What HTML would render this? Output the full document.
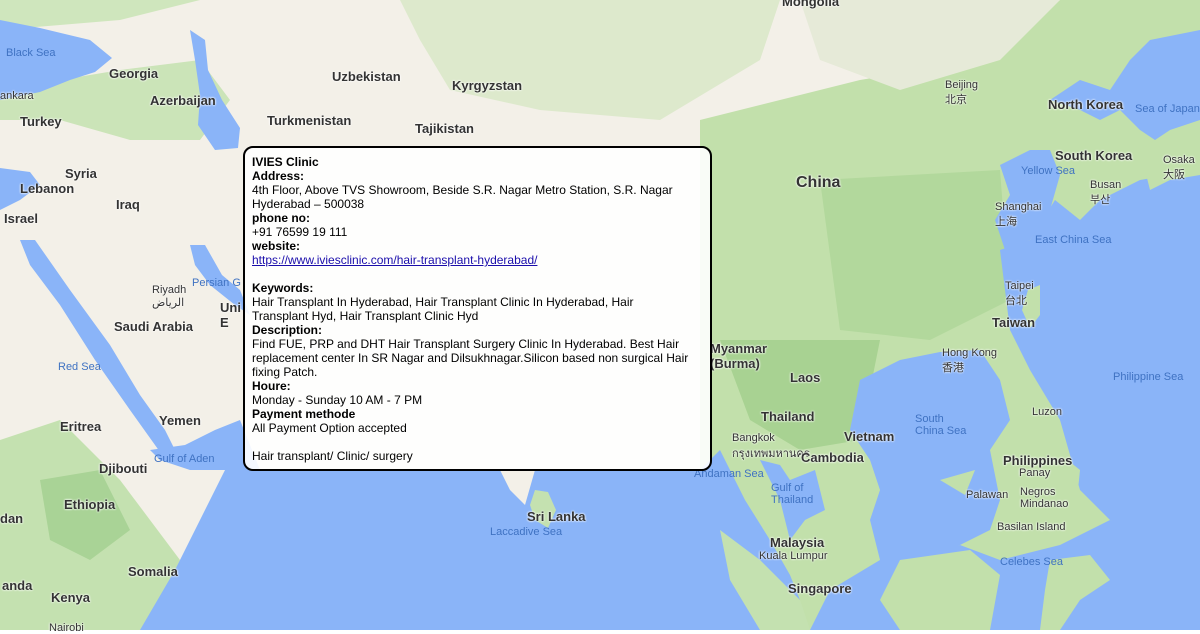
<!DOCTYPE html>
<html><head><meta charset="utf-8"><style>
html,body{margin:0;padding:0;width:1200px;height:630px;overflow:hidden;font-family:"Liberation Sans",Arial,sans-serif}
#map{position:absolute;left:0;top:0}
.l{position:absolute;font-size:13px;color:#333;font-weight:bold;text-shadow:0 0 2px #fff,0 0 2px #fff;white-space:nowrap}
.s{font-size:11px;font-weight:normal}
.w{color:#3f72c2;font-weight:normal;font-size:11px;text-shadow:none}
.c{font-size:16px}
#box{position:absolute;left:243px;top:146px;width:458px;height:314px;border:2px solid #000;border-radius:10px;background:rgba(255,255,255,0.9);padding:7px 0 0 7px;font-size:12px;line-height:14px;color:#000;box-sizing:content-box}
#box a{color:#1a0dab;text-decoration:underline}
</style></head><body>
<svg id="map" width="1200" height="630" viewBox="0 0 1200 630">
<rect width="1200" height="630" fill="#f3f0e8"/>
<!-- green areas -->
<path d="M0 30 L120 20 L200 0 L0 0Z" fill="#cfe6bd"/>
<path d="M0 95 L60 80 L120 70 L200 60 L230 100 L200 140 L130 140 L60 120 L0 120Z" fill="#cbe4b8"/>
<path d="M400 0 L780 0 L760 60 L660 120 L540 110 L450 90 L420 40Z" fill="#dde9cc"/>
<path d="M700 120 L860 80 L980 60 L1060 0 L1200 0 L1200 630 L700 630Z" fill="#c2e0ab"/>
<path d="M800 0 L1060 0 L1000 60 L900 90 L820 60Z" fill="#e6ead8"/>
<path d="M0 440 L60 420 L120 480 L150 520 L180 560 L150 630 L0 630Z" fill="#c4e1b0"/>
<path d="M40 480 L100 470 L130 530 L90 560 L50 540Z" fill="#a9d396"/>
<path d="M820 180 L1000 170 L1010 300 L930 340 L840 330Z" fill="#b2d89c"/>
<path d="M720 340 L880 340 L860 440 L800 450 L750 420Z" fill="#a8d292"/>
<!-- water -->
<path d="M0 20 L40 28 L90 40 L112 58 L95 72 L70 80 L40 92 L0 100Z" fill="#8ab4f8"/>
<path d="M190 30 L205 40 L208 70 L222 100 L240 128 L238 148 L215 150 L198 125 L200 95 L195 60Z" fill="#8ab4f8"/>
<path d="M0 168 L30 172 L40 185 L20 200 L0 210Z" fill="#8ab4f8"/>
<path d="M20 240 L35 240 L70 290 L110 345 L140 395 L165 430 L175 450 L160 452 L130 410 L95 360 L60 305 L30 265Z" fill="#8ab4f8"/>
<path d="M190 245 L205 245 L222 275 L240 290 L250 315 L235 305 L210 285 L195 265Z" fill="#8ab4f8"/>
<!-- Arabian sea & Indian ocean -->
<path d="M150 450 L185 445 L215 430 L240 420 L260 470 L500 470 L510 490 L525 505 L535 470 L600 470 L650 470 L700 470 L720 450 L730 470 L745 500 L770 540 L790 575 L800 600 L790 630 L140 630 L175 570 L205 510 L225 470 L190 470 L160 460Z" fill="#8ab4f8"/>
<path d="M535 490 L548 492 L556 510 L548 528 L535 520 L530 505Z" fill="#c4e1b0"/>
<path d="M720 530 L760 560 L800 600 L810 630 L760 630 L730 580Z" fill="#c4e1b0"/>
<!-- SE asia seas -->
<path d="M760 460 L780 465 L790 480 L815 470 L825 510 L805 520 L790 540 L780 500Z" fill="#8ab4f8"/>
<path d="M860 380 L900 360 L940 352 L980 350 L1000 380 L1010 420 L990 450 L1000 500 L990 530 L960 545 L910 560 L880 560 L870 520 L880 490 L870 460 L850 430 Z" fill="#8ab4f8"/>
<path d="M880 560 L960 545 L1000 560 L1060 545 L1110 520 L1200 530 L1200 630 L810 630 L830 590Z" fill="#8ab4f8"/>
<path d="M900 560 L970 550 L1000 575 L990 630 L900 630 L880 600Z" fill="#c2e0ab"/>
<path d="M1050 560 L1090 555 L1110 580 L1080 600 L1060 630 L1040 630 L1045 590Z" fill="#c2e0ab"/>
<path d="M1000 250 L1030 240 L1055 200 L1080 220 L1100 200 L1140 180 L1200 170 L1200 540 L1110 520 L1080 490 L1060 420 L1030 370 L1010 330Z" fill="#8ab4f8"/>
<path d="M1000 165 L1030 150 L1050 150 L1060 175 L1050 210 L1030 240 L1005 250 L995 220 L1010 195Z" fill="#8ab4f8"/>
<path d="M1050 100 L1080 80 L1110 90 L1130 60 L1150 40 L1200 30 L1200 130 L1170 150 L1140 130 L1120 110 L1100 120 L1080 110Z" fill="#8ab4f8"/>
<path d="M1060 130 L1085 115 L1105 130 L1115 160 L1105 190 L1085 195 L1070 170Z" fill="#c2e0ab"/>
<path d="M1140 150 L1170 130 L1200 120 L1200 175 L1170 180 L1150 190Z" fill="#c2e0ab"/>
<path d="M1028 290 L1040 285 L1040 315 L1030 328 L1022 310Z" fill="#c2e0ab"/>
<path d="M1020 390 L1040 395 L1040 430 L1055 450 L1080 470 L1075 520 L1050 515 L1020 490 L1010 460 L1025 430Z" fill="#c2e0ab"/>
<path d="M940 480 L975 470 L965 495Z" fill="#c2e0ab"/>
</svg>
<div class="l w" style="left:6px;top:47px">Black Sea</div>
<div class="l" style="left:109px;top:66px">Georgia</div>
<div class="l" style="left:150px;top:93px">Azerbaijan</div>
<div class="l s" style="left:0;top:90px">ankara</div>
<div class="l" style="left:20px;top:114px">Turkey</div>
<div class="l" style="left:332px;top:69px">Uzbekistan</div>
<div class="l" style="left:452px;top:78px">Kyrgyzstan</div>
<div class="l" style="left:267px;top:113px">Turkmenistan</div>
<div class="l" style="left:415px;top:121px">Tajikistan</div>
<div class="l" style="left:65px;top:166px">Syria</div>
<div class="l" style="left:20px;top:181px">Lebanon</div>
<div class="l" style="left:4px;top:211px">Israel</div>
<div class="l" style="left:116px;top:197px">Iraq</div>
<div class="l s" style="left:152px;top:284px">Riyadh<br>الرياض</div>
<div class="l" style="left:114px;top:319px">Saudi Arabia</div>
<div class="l w" style="left:58px;top:361px">Red Sea</div>
<div class="l w" style="left:192px;top:277px">Persian G</div>
<div class="l" style="left:159px;top:413px">Yemen</div>
<div class="l" style="left:60px;top:419px">Eritrea</div>
<div class="l w" style="left:154px;top:453px">Gulf of Aden</div>
<div class="l" style="left:99px;top:461px">Djibouti</div>
<div class="l" style="left:64px;top:497px">Ethiopia</div>
<div class="l" style="left:0;top:511px">dan</div>
<div class="l" style="left:128px;top:564px">Somalia</div>
<div class="l" style="left:51px;top:590px">Kenya</div>
<div class="l s" style="left:49px;top:622px">Nairobi</div>
<div class="l" style="left:2px;top:578px">anda</div>
<div class="l" style="left:782px;top:-6px">Mongolia</div>
<div class="l s" style="left:945px;top:79px">Beijing<br>北京</div>
<div class="l" style="left:1048px;top:97px">North Korea</div>
<div class="l w" style="left:1135px;top:103px">Sea of Japan</div>
<div class="l" style="left:1055px;top:148px">South Korea</div>
<div class="l s" style="left:1163px;top:154px">Osaka<br>大阪</div>
<div class="l w" style="left:1021px;top:165px">Yellow Sea</div>
<div class="l s" style="left:1090px;top:179px">Busan<br>부산</div>
<div class="l c" style="left:796px;top:174px">China</div>
<div class="l s" style="left:995px;top:201px">Shanghai<br>上海</div>
<div class="l w" style="left:1035px;top:234px">East China Sea</div>
<div class="l s" style="left:1005px;top:280px">Taipei<br>台北</div>
<div class="l" style="left:992px;top:315px">Taiwan</div>
<div class="l s" style="left:942px;top:347px">Hong Kong<br>香港</div>
<div class="l w" style="left:1113px;top:371px">Philippine Sea</div>
<div class="l" style="left:710px;top:341px">Myanmar<br>(Burma)</div>
<div class="l" style="left:790px;top:370px">Laos</div>
<div class="l" style="left:761px;top:409px">Thailand</div>
<div class="l s" style="left:732px;top:432px">Bangkok<br>กรุงเทพมหานคร</div>
<div class="l" style="left:844px;top:429px">Vietnam</div>
<div class="l" style="left:801px;top:450px">Cambodia</div>
<div class="l w" style="left:915px;top:413px">South<br>China Sea</div>
<div class="l w" style="left:694px;top:468px">Andaman Sea</div>
<div class="l w" style="left:771px;top:482px">Gulf of<br>Thailand</div>
<div class="l s" style="left:1032px;top:406px">Luzon</div>
<div class="l" style="left:1003px;top:453px">Philippines</div>
<div class="l s" style="left:1019px;top:467px">Panay</div>
<div class="l s" style="left:966px;top:489px">Palawan</div>
<div class="l s" style="left:1020px;top:486px">Negros<br>Mindanao</div>
<div class="l s" style="left:997px;top:521px">Basilan Island</div>
<div class="l w" style="left:1000px;top:556px">Celebes Sea</div>
<div class="l" style="left:770px;top:535px">Malaysia</div>
<div class="l s" style="left:759px;top:550px">Kuala Lumpur</div>
<div class="l" style="left:788px;top:581px">Singapore</div>
<div class="l" style="left:527px;top:509px">Sri Lanka</div>
<div class="l w" style="left:490px;top:526px">Laccadive Sea</div>
<div class="l" style="left:220px;top:300px">Uni<br>E</div>
<div id="box"><b>IVIES Clinic</b><br><b>Address:</b><br>4th Floor, Above TVS Showroom, Beside S.R. Nagar Metro Station, S.R. Nagar<br>Hyderabad – 500038<br><b>phone no:</b><br>+91 76599 19 111<br><b>website:</b><br><a>https://www.iviesclinic.com/hair-transplant-hyderabad/</a><br><br><b>Keywords:</b><br>Hair Transplant In Hyderabad, Hair Transplant Clinic In Hyderabad, Hair<br>Transplant Hyd, Hair Transplant Clinic Hyd<br><b>Description:</b><br>Find FUE, PRP and DHT Hair Transplant Surgery Clinic In Hyderabad. Best Hair<br>replacement center In SR Nagar and Dilsukhnagar.Silicon based non surgical Hair<br>fixing Patch.<br><b>Houre:</b><br>Monday - Sunday 10 AM - 7 PM<br><b>Payment methode</b><br>All Payment Option accepted<br><br>Hair transplant/ Clinic/ surgery</div>
</body></html>
